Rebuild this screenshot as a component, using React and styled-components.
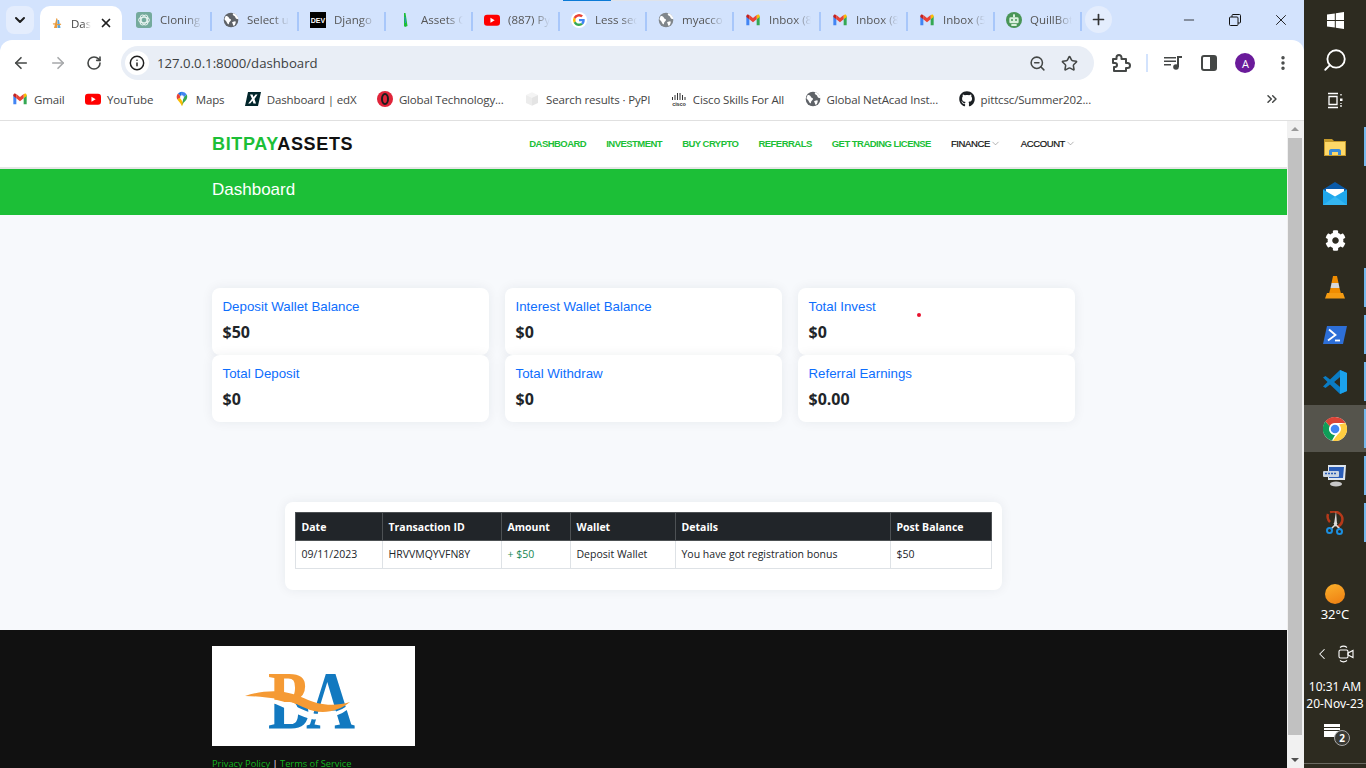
import styled, { createGlobalStyle } from 'styled-components';
import {
    ArrowLeft,
    ArrowRight,
    ChevronDown,
    ChevronLeft,
    ChevronsRight,
    EllipsisVertical,
    Info,
    Minus,
    Plus,
    RotateCw,
    Search,
    Star,
    X,
    ZoomOut,
} from 'lucide-react';
import { FaCog, FaGithub } from 'react-icons/fa';

const GREEN = '#1cbf37';
const CHROME_FONT = '"Open Sans", "Noto Sans", sans-serif';

const GlobalStyle = createGlobalStyle`
    html, body {
        margin: 0;
        height: 100%;
        overflow: hidden;
        background: #2d2b20;
    }
    #root {
        height: 100%;
    }
    * {
        box-sizing: border-box;
    }
`;

/* favicons */
const GmailIcon = ({ size = 16 }) => (
    <svg width={size} height={size} viewBox="0 0 24 24">
        <path d="M2 6v14h4.5V10z" fill="#4285f4" />
        <path d="M22 6v14h-4.5V10z" fill="#34a853" />
        <path d="M17.5 4.5V11L22 7.5V6c0-2-2.4-3-3.6-1.6z" fill="#fbbc04" />
        <path d="M6.5 11V4.5L12 9l5.500-4.500V11L12 15.300z" fill="#ea4335" />
        <path d="M2 6c0-2 2.400-3 3.600-1.600l.9.700V11L2 7.500z" fill="#c5221f" />
    </svg>
);
const YoutubeIcon = () => (
    <svg width="16" height="16" viewBox="0 0 24 24">
        <rect x="0" y="4" width="24" height="16.500" rx="4.500" fill="#f00" />
        <path d="M9.700 8.500v7.500l6.300-3.750z" fill="#fff" />
    </svg>
);
const GlobeIcon = ({ color = '#5f6368' }) => (
    <svg width="16" height="16" viewBox="0 0 24 24">
        <circle cx="12" cy="12" r="11" fill={color} />
        <path d="M4 6c3 0 4 1 5 3s3 1 3 3-3 2-3 5-2 1-3-1-3-4-4-5zM15 2c-1 2 0 3 2 4s1 3 3 4l3 1c0-4-3-8-8-9zM14 15l4-1c2 0 1 3 0 5s-3 2-3 0-2-2-1-4z" fill="#fff" />
    </svg>
);
const ChatgptIcon = () => (
    <svg width="16" height="16" viewBox="0 0 24 24">
        <rect width="24" height="24" rx="4" fill="#74aa9c" />
        <g fill="none" stroke="#e6f2ef" strokeWidth="1.600">
            <ellipse cx="12" cy="12" rx="8" ry="4.200" />
            <ellipse cx="12" cy="12" rx="8" ry="4.200" transform="rotate(60 12 12)" />
            <ellipse cx="12" cy="12" rx="8" ry="4.200" transform="rotate(120 12 12)" />
        </g>
    </svg>
);
const DevIcon = () => (
    <svg width="16" height="16" viewBox="0 0 16 16">
        <rect width="16" height="16" fill="#000" />
        <text x="8" y="11" textAnchor="middle" fontFamily="'Liberation Sans', sans-serif" fontSize="7" fontWeight="700" fill="#fff">
            DEV
        </text>
    </svg>
);
const AssetsIcon = () => (
    <svg width="16" height="16" viewBox="0 0 16 16">
        <path d="M7 1l1.500 0 2 13-2.500 1-1-1z" fill="#1cbf37" />
        <path d="M7.500 5l1 0 .5 6-1 0z" fill="#2d8fd0" />
    </svg>
);
const GoogleIcon = () => (
    <svg width="16" height="16" viewBox="0 0 24 24">
        <circle cx="12" cy="12" r="12" fill="#fff" />
        <path d="M20.600 12.200c0-.6-.1-1.200-.2-1.800H12v3.400h4.800a4 4 0 0 1-1.800 2.700l2.900 2.200c1.700-1.600 2.700-3.800 2.700-6.500z" fill="#4285f4" />
        <path d="M12 21c2.400 0 4.400-.8 5.900-2.200L15 16.500c-.8.500-1.800.9-3 .9-2.300 0-4.300-1.600-5-3.700l-3 2.300C5.500 19 8.500 21 12 21z" fill="#34a853" />
        <path d="M7 13.700a5.400 5.400 0 0 1 0-3.400l-3-2.300a9 9 0 0 0 0 8z" fill="#fbbc05" />
        <path d="M12 6.600c1.300 0 2.500.5 3.400 1.300L18 5.400A9 9 0 0 0 4 8l3 2.300c.7-2.100 2.700-3.700 5-3.700z" fill="#ea4335" />
    </svg>
);
const QuillbotIcon = () => (
    <svg width="16" height="16" viewBox="0 0 24 24">
        <circle cx="12" cy="12" r="12" fill="#499557" />
        <rect x="5" y="8" width="14" height="9" rx="2" fill="#d9efdd" />
        <circle cx="9" cy="12" r="1.500" fill="#499557" />
        <circle cx="15" cy="12" r="1.500" fill="#499557" />
        <rect x="10.500" y="3.500" width="3" height="4.500" fill="#d9efdd" />
        <rect x="8" y="18" width="8" height="3" fill="#d9efdd" />
    </svg>
);
const TabAssetIcon = () => (
    <svg width="16" height="16" viewBox="0 0 16 16">
        <path d="M5 13L7.500 3 8.500 4 8 13z" fill="#e99a3c" />
        <path d="M8.500 5h1.500l1.500 8H8.500z" fill="#5aa5dc" />
        <path d="M4 9c2.500-1 5 2 8 0" stroke="#e99a3c" strokeWidth="1.200" fill="none" />
    </svg>
);
const MapsIcon = () => (
    <svg width="16" height="16" viewBox="0 0 24 24">
        <path d="M12 1a8 8 0 0 0-6 2.800l5 5z" fill="#1a73e8" />
        <path d="M6 3.800A8 8 0 0 0 4 9c0 1.500.4 2.700 1 3.800L11 9z" fill="#ea4335" />
        <path d="M12 1a8 8 0 0 1 7 4.200L14.500 10l-3.500-1.200z" fill="#4285f4" />
        <path d="M5 12.800c1.500 2.800 5 5 7 10.200l2-5L9 10z" fill="#fbbc04" />
        <path d="M19 5.200c1.300 2.600 1.100 5-.3 7.500-1.500 2.500-3.500 3.500-4.700 5.300-.6.900-1.500 3.500-2 5 1.700-4 .4-9 2.500-13z" fill="#34a853" />
        <circle cx="12" cy="9" r="2.800" fill="#fff" />
    </svg>
);
const EdxIcon = () => (
    <svg width="16" height="16" viewBox="0 0 16 16">
        <path d="M3 1h13l-3 14H0z" fill="#02262b" />
        <path d="M5 3.500h2.500L8.500 6l2-2.500h2L9.500 8l1.500 4.500H8.500l-1-2.800-2.300 2.800h-2L7 7.800z" fill="#fff" />
    </svg>
);
const OperaIcon = () => (
    <svg width="16" height="16" viewBox="0 0 24 24">
        <circle cx="12" cy="12" r="12" fill="#e0243a" />
        <ellipse cx="12" cy="12" rx="4.500" ry="7.500" fill="none" stroke="#1d1d1d" strokeWidth="3" />
    </svg>
);
const PypiIcon = () => (
    <svg width="16" height="16" viewBox="0 0 24 24">
        <path d="M12 2l9 4-9 4-9-4z" fill="#f4f4f4" />
        <path d="M3 6l9 4v12l-9-4z" fill="#ececec" />
        <path d="M21 6l-9 4v12l9-4z" fill="#e4e4e4" />
    </svg>
);
const CiscoIcon = () => (
    <svg width="16" height="16" viewBox="0 0 16 16">
        <g stroke="#333" strokeWidth="1">
            {[1.5, 4, 6.500, 9, 11.500, 14].map((x, i) => (
                <line key={x} x1={x} x2={x} y1={[6, 4, 2, 2, 4, 6][i]} y2="9" />
            ))}
        </g>
        <text x="8" y="15" textAnchor="middle" fontFamily="'Liberation Sans', sans-serif" fontSize="5.500" fontWeight="700" fill="#333">
            cisco
        </text>
    </svg>
);

/* taskbar icons */
const WindowsIcon = () => (
    <svg width="17" height="17" viewBox="0 0 17 17">
        <path d="M0 2.500l7.800-1.100v6.600H0zM8.800 1.200L17 0v8H8.800zM0 9h7.800v6.600L0 14.500zM8.800 9H17v8l-8.200-1.200z" fill="#fff" />
    </svg>
);
const TaskViewIcon = () => (
    <svg width="17" height="17" viewBox="0 0 17 17" fill="none" stroke="#fff" strokeWidth="1.300">
        <path d="M1 1.500h10M1 15.500h10M2 4.500h8v8H2z" />
        <path d="M14 2v1.500M14 13v2" />
        <rect x="13" y="6.500" width="2.500" height="2.500" fill="#fff" stroke="none" />
        <path d="M14 11v1" />
    </svg>
);
const FolderIcon = () => (
    <svg width="22" height="18" viewBox="0 0 22 18">
        <path d="M0 1h8l2 2h12v15H0z" fill="#c59a2b" />
        <path d="M1 4h20v13H1z" fill="#fdd868" />
        <path d="M5 17v-4c0-1 1-2 2-2h8c1 0 2 1 2 2v4h-3v-3H8v3z" fill="#3a8bd8" />
    </svg>
);
const MailIcon = () => (
    <svg width="24" height="23" viewBox="0 0 24 23">
        <path d="M12 0l12 7.500V10H0V7.500z" fill="#0a5aa8" />
        <path d="M3 7h18v7l-9 4-9-4z" fill="#fff" />
        <path d="M0 7.500l12 7 12-7V23H0z" fill="#1fa8ec" />
        <path d="M0 23l12-8.500 12 8.500z" fill="#43c0f5" opacity=".6" />
    </svg>
);
const VlcIcon = () => (
    <svg width="20" height="23" viewBox="0 0 20 23">
        <path d="M8 0h4l1.500 7h-7z" fill="#f08c00" />
        <path d="M6.500 7h7l1 5h-9z" fill="#d8d8d8" />
        <path d="M5.500 12h9l1.500 5.500H4z" fill="#f08c00" />
        <path d="M2 17h16l2 5.500H0z" fill="#f59b12" />
    </svg>
);
const PowershellIcon = () => (
    <svg width="24" height="18" viewBox="0 0 24 18">
        <path d="M4 0h20l-4 18H0z" fill="#2d6fd8" />
        <path d="M6 3.500l6.500 5.500L5 14.500" fill="none" stroke="#fff" strokeWidth="1.800" />
        <path d="M12 14.500h5" stroke="#fff" strokeWidth="1.800" />
    </svg>
);
const VscodeIcon = () => (
    <svg width="24" height="24" viewBox="0 0 24 24">
        <path d="M17 0l7 3v18l-7 3-10-9.500L2.500 18 0 16.500 4.500 12 0 7.500 2.500 6 7 9.500z" fill="#0a7cc4" />
        <path d="M17 0l7 3v18l-7 3V17l-6-5 6-5z" fill="#1ba1ec" />
        <path d="M17 7l-6 5 6 5z" fill="#2d2b20" />
    </svg>
);
const ChromeIcon = () => (
    <svg width="24" height="24" viewBox="0 0 24 24">
        <circle cx="12" cy="12" r="12" fill="#fff" />
        <path d="M12 0a12 12 0 0 1 10.400 6H12a6 6 0 0 0-5.300 3.200L2.400 4.500A12 12 0 0 1 12 0z" fill="#db4437" />
        <path d="M2.400 4.500l4.300 4.700A6 6 0 0 0 12 18l-3 5.600A12 12 0 0 1 2.400 4.500z" fill="#0f9d58" />
        <path d="M22.400 6A12 12 0 0 1 9.800 23.800L15.100 17A6 6 0 0 0 16 7.500z" fill="#ffcd40" />
        <circle cx="12" cy="12" r="5.500" fill="#fff" />
        <circle cx="12" cy="12" r="4.300" fill="#4285f4" />
    </svg>
);
const RdpIcon = () => (
    <svg width="24" height="24" viewBox="0 0 24 24">
        <path d="M5 1l18 0-1 15H5z" fill="#dfe6ee" />
        <path d="M6 3h15l-1 11H6z" fill="#2a5db8" />
        <rect x="0" y="7" width="16" height="6" rx="1" fill="#c9d4e2" />
        <path d="M2 9.500h12" stroke="#2a5db8" strokeWidth="1.500" strokeDasharray="2 1" />
        <ellipse cx="13" cy="20" rx="6" ry="2.500" fill="#c8c8c8" />
    </svg>
);
const SnipIcon = () => (
    <svg width="20" height="24" viewBox="0 0 20 24">
        <path d="M5 1c8-2 14 3 12 10-1 3-3 4-5 5" fill="none" stroke="#b5391a" strokeWidth="2.500" />
        <path d="M3 3c-1 3 0 6 2 8" fill="none" stroke="#b5391a" strokeWidth="2.500" />
        <path d="M11 0l1 13-2 3-1-3z" fill="#ddd" />
        <path d="M12 12l-6 6M9 12l6 6" stroke="#ddd" strokeWidth="1.500" />
        <circle cx="4.500" cy="19.500" r="2.500" fill="none" stroke="#1b8fe0" strokeWidth="2" />
        <circle cx="14.500" cy="20.500" r="2.500" fill="none" stroke="#1b8fe0" strokeWidth="2" />
    </svg>
);
const MeetIcon = () => (
    <svg width="16" height="18" viewBox="0 0 16 18" fill="none" stroke="#fff" strokeWidth="1.100">
        <rect x="1" y="5" width="9" height="8" rx="1.500" />
        <path d="M10 8l5-2.500v7L10 10z" />
        <path d="M2 2.500c2-1.500 5-1.500 7 0M2 15.500c2 1.500 5 1.500 7 0" />
    </svg>
);
const ExtensionIcon = () => (
    <svg width="20" height="20" viewBox="0 0 20 20" fill="none" stroke="#444746" strokeWidth="2" strokeLinejoin="round">
        <path d="M2 6h3.500V4.500a2.500 2.500 0 0 1 5 0V6H15v4h1.500a2.500 2.500 0 0 1 0 5H15v3H3v-4h1a2 2 0 0 0 0-4H2z" />
    </svg>
);
const MediaIcon = () => (
    <svg width="18" height="14" viewBox="0 0 18 14" fill="#444746">
        <path d="M0 1h12v1.600H0zM0 4.500h12v1.600H0zM0 8h7v1.600H0z" />
        <path d="M13 0h5v2h-3v9h-2z" />
        <circle cx="12" cy="11" r="2.800" />
    </svg>
);
const SidePanelIcon = () => (
    <svg width="16" height="16" viewBox="0 0 16 16">
        <rect x="1" y="1" width="14" height="14" rx="2" fill="none" stroke="#444746" strokeWidth="2" />
        <rect x="9" y="1" width="6" height="14" fill="#444746" />
    </svg>
);
const RestoreIcon = () => (
    <svg width="12" height="12" viewBox="0 0 12 12" fill="none" stroke="#111" strokeWidth="1">
        <rect x=".5" y="3" width="8.500" height="8.500" rx="1" />
        <path d="M3 3V1.500a1 1 0 0 1 1-1h6.500a1 1 0 0 1 1 1V8a1 1 0 0 1-1 1H9" />
    </svg>
);
const BaLogo = () => (
    <svg width="203" height="100" viewBox="0 0 203 100">
        <defs>
            <linearGradient id="bFill" x1="0" x2="0" y1="0" y2="1">
                <stop offset="0.55" stopColor="#f59a34" />
                <stop offset="0.55" stopColor="#1279c0" />
            </linearGradient>
        </defs>
        <text transform="translate(56 82) scale(.76 1)" fontFamily="'Liberation Serif', serif" fontSize="83" fontWeight="700" fill="url(#bFill)">
            B
        </text>
        <text transform="translate(94 82) scale(.82 1)" fontFamily="'Liberation Serif', serif" fontSize="83" fontWeight="700" fill="#1279c0">
            A
        </text>
        <path d="M60 55C75 55 88 66 102 69C115 71 128 67 138 60C128 68 115 72 102 72C88 70 75 60 60 55z" fill="#fff" stroke="#fff" strokeWidth="3" />
        <path d="M33 50C45 46 60 44 72 46C85 48 92 53 105 57C117 60 128 59 138 56C128 64 115 68 102 65C90 62 80 54 68 53C55 52 45 50 33 50z" fill="#f59a34" />
    </svg>
);

const TABS = [
    { icon: <ChatgptIcon />, title: 'Cloning' },
    { icon: <GlobeIcon />, title: 'Select u' },
    { icon: <DevIcon />, title: 'Django' },
    { icon: <AssetsIcon />, title: 'Assets C' },
    { icon: <YoutubeIcon />, title: '(887) Py' },
    { icon: <GoogleIcon />, title: 'Less sec' },
    { icon: <GlobeIcon color="#80868b" />, title: 'myacco' },
    { icon: <GmailIcon />, title: 'Inbox (8' },
    { icon: <GmailIcon />, title: 'Inbox (8' },
    { icon: <GmailIcon />, title: 'Inbox (5' },
    { icon: <QuillbotIcon />, title: 'QuillBot' },
];

const BOOKMARKS = [
    { icon: <GmailIcon />, title: 'Gmail' },
    { icon: <YoutubeIcon />, title: 'YouTube' },
    { icon: <MapsIcon />, title: 'Maps' },
    { icon: <EdxIcon />, title: 'Dashboard | edX' },
    { icon: <OperaIcon />, title: 'Global Technology...' },
    { icon: <PypiIcon />, title: 'Search results · PyPI' },
    { icon: <CiscoIcon />, title: 'Cisco Skills For All' },
    { icon: <GlobeIcon />, title: 'Global NetAcad Inst...' },
    { icon: <FaGithub size={16} color="#1b1f23" />, title: 'pittcsc/Summer202...' },
];

const NAV_LINKS = ['DASHBOARD', 'INVESTMENT', 'BUY CRYPTO', 'REFERRALS', 'GET TRADING LICENSE'];

const CARDS = [
    { label: 'Deposit Wallet Balance', value: '$50' },
    { label: 'Interest Wallet Balance', value: '$0' },
    { label: 'Total Invest', value: '$0' },
    { label: 'Total Deposit', value: '$0' },
    { label: 'Total Withdraw', value: '$0' },
    { label: 'Referral Earnings', value: '$0.00' },
];

const COLUMNS = [
    { title: 'Date', width: 87 },
    { title: 'Transaction ID', width: 119 },
    { title: 'Amount', width: 69 },
    { title: 'Wallet', width: 105 },
    { title: 'Details', width: 215 },
    { title: 'Post Balance', width: 101 },
];

const PINNED = [
    { icon: <FolderIcon />, running: true },
    { icon: <MailIcon /> },
    { icon: <FaCog size={21} color="#fff" /> },
    { icon: <VlcIcon />, running: true },
    { icon: <PowershellIcon />, running: true },
    { icon: <VscodeIcon />, running: true },
    { icon: <ChromeIcon />, running: true, active: true },
    { icon: <RdpIcon />, running: true },
    { icon: <SnipIcon />, running: true },
];

const App = () => (
    <Desktop>
        <GlobalStyle />
        <BrowserWindow>
            <TabStrip>
                <LoadingBar />
                <TabSearchButton>
                    <ChevronDown size={16} strokeWidth={3} color="#1f1f1f" />
                </TabSearchButton>
                <ActiveTab>
                    <TabAssetIcon />
                    <ActiveTabTitle>Das</ActiveTabTitle>
                    <X size={14} strokeWidth={3} color="#1f1f1f" />
                </ActiveTab>
                <TabList>
                    {TABS.map((tab, i) => (
                        <Tab key={i}>
                            <IconSlot>{tab.icon}</IconSlot>
                            <TabTitle>{tab.title}</TabTitle>
                        </Tab>
                    ))}
                </TabList>
                <NewTabButton>
                    <Plus size={17} strokeWidth={2.4} color="#333" />
                </NewTabButton>
                <WindowControls>
                    <WindowButton>
                        <Minus size={16} strokeWidth={1.2} color="#111" />
                    </WindowButton>
                    <WindowButton>
                        <RestoreIcon />
                    </WindowButton>
                    <WindowButton>
                        <X size={18} strokeWidth={1.2} color="#111" />
                    </WindowButton>
                </WindowControls>
            </TabStrip>
            <Toolbar>
                <NavIcons>
                    <ArrowLeft size={18} strokeWidth={2.2} color="#444746" />
                    <ArrowRight size={18} strokeWidth={2.2} color="#a6a8aa" />
                    <RotateCw size={16} strokeWidth={2.4} color="#444746" />
                </NavIcons>
                <AddressBar>
                    <InfoBadge>
                        <Info size={16} strokeWidth={2.2} color="#1f1f1f" />
                    </InfoBadge>
                    <UrlText>127.0.0.1:8000/dashboard</UrlText>
                    <AddressActions>
                        <ZoomOut size={17} strokeWidth={2.2} color="#444746" />
                        <Star size={17} strokeWidth={2.2} color="#444746" />
                    </AddressActions>
                </AddressBar>
                <ToolbarActions>
                    <ExtensionIcon />
                    <ToolbarDivider />
                    <MediaIcon />
                    <SidePanelIcon />
                    <Avatar>A</Avatar>
                    <EllipsisVertical size={18} strokeWidth={2.6} color="#444746" />
                </ToolbarActions>
            </Toolbar>
            <BookmarkBar>
                <BookmarkList>
                    {BOOKMARKS.map((mark) => (
                        <Bookmark key={mark.title}>
                            <IconSlot>{mark.icon}</IconSlot>
                            <span>{mark.title}</span>
                        </Bookmark>
                    ))}
                </BookmarkList>
                <ChevronsRight size={16} strokeWidth={2.2} color="#444746" />
            </BookmarkBar>
            <Viewport>
                <Page>
                    <SiteHeader>
                        <Container>
                            <HeaderRow>
                                <Brand>
                                    <BrandAccent>BITPAY</BrandAccent>ASSETS
                                </Brand>
                                <SiteNav>
                                    {NAV_LINKS.map((link) => (
                                        <NavLink key={link}>{link}</NavLink>
                                    ))}
                                    <NavMenu>
                                        FINANCE <ChevronDown size={11} strokeWidth={1.2} color="#777" />
                                    </NavMenu>
                                    <NavMenu>
                                        ACCOUNT <ChevronDown size={11} strokeWidth={1.2} color="#777" />
                                    </NavMenu>
                                </SiteNav>
                            </HeaderRow>
                        </Container>
                    </SiteHeader>
                    <TitleBand>
                        <Container>
                            <PageTitle>Dashboard</PageTitle>
                        </Container>
                    </TitleBand>
                    <Main>
                        <Container>
                            <CardGrid>
                                {CARDS.map((card) => (
                                    <StatCard key={card.label}>
                                        <StatLabel>{card.label}</StatLabel>
                                        <StatValue>{card.value}</StatValue>
                                    </StatCard>
                                ))}
                            </CardGrid>
                        </Container>
                        <TableCard>
                            <Table>
                                <colgroup>
                                    {COLUMNS.map((col) => (
                                        <col key={col.title} width={col.width} />
                                    ))}
                                </colgroup>
                                <thead>
                                    <tr>
                                        {COLUMNS.map((col) => (
                                            <HeadCell key={col.title}>{col.title}</HeadCell>
                                        ))}
                                    </tr>
                                </thead>
                                <tbody>
                                    <tr>
                                        <Cell>09/11/2023</Cell>
                                        <Cell>HRVVMQYVFN8Y</Cell>
                                        <Cell $credit>+ $50</Cell>
                                        <Cell>Deposit Wallet</Cell>
                                        <Cell>You have got registration bonus</Cell>
                                        <Cell>$50</Cell>
                                    </tr>
                                </tbody>
                            </Table>
                        </TableCard>
                    </Main>
                    <Footer>
                        <Container>
                            <LogoBox>
                                <BaLogo />
                            </LogoBox>
                            <FooterLinks>
                                <FooterLink>Privacy Policy</FooterLink> | <FooterLink>Terms of Service</FooterLink>
                            </FooterLinks>
                        </Container>
                    </Footer>
                    <PointerDot />
                </Page>
                <Scrollbar>
                    <ScrollArrow $up />
                    <ScrollThumb />
                    <ScrollArrow />
                </Scrollbar>
            </Viewport>
        </BrowserWindow>
        <Taskbar>
            <StartGroup>
                <TaskItem>
                    <WindowsIcon />
                </TaskItem>
                <TaskItem>
                    <Search size={26} strokeWidth={1.7} color="#fff" style={{ transform: 'scaleX(-1)' }} />
                </TaskItem>
                <TaskItem>
                    <TaskViewIcon />
                </TaskItem>
            </StartGroup>
            <PinnedGroup>
                {PINNED.map((item, i) => (
                    <PinnedItem key={i} $active={item.active}>
                        {item.icon}
                        {item.running && <RunningMark />}
                    </PinnedItem>
                ))}
            </PinnedGroup>
            <Tray>
                <WeatherSun />
                <TrayText>32°C</TrayText>
                <TrayIcons>
                    <ChevronLeft size={18} strokeWidth={1.4} color="#fff" />
                    <MeetIcon />
                </TrayIcons>
                <Clock>
                    <div>10:31 AM</div>
                    <div>20-Nov-23</div>
                </Clock>
                <Notifications>
                    <NoteBubble />
                    <NoteBadge>2</NoteBadge>
                </Notifications>
            </Tray>
        </Taskbar>
    </Desktop>
);

const Desktop = styled.div`
    display: flex;
    width: 100%;
    height: 100%;
    overflow: hidden;
`;
const BrowserWindow = styled.div`
    display: flex;
    flex-direction: column;
    width: 1304px;
    height: 100%;
    background: #d3e3fd;
`;
const TabStrip = styled.div`
    position: relative;
    display: flex;
    align-items: flex-start;
    flex: none;
    height: 40px;
    padding: 6px 0 0 6px;
    font-family: ${CHROME_FONT};
`;
const LoadingBar = styled.div`
    position: absolute;
    top: 0;
    left: 563px;
    width: 224px;
    height: 1px;
    background: linear-gradient(to right, #0b7ad6 48px, #dfe3ea 48px);
`;
const TabSearchButton = styled.div`
    display: flex;
    align-items: center;
    justify-content: center;
    flex: none;
    width: 28px;
    height: 28px;
    border-radius: 8px;
    background: #e4edfd;
`;
const ActiveTab = styled.div`
    display: flex;
    align-items: center;
    flex: none;
    width: 82px;
    height: 34px;
    margin-left: 6px;
    padding: 0 9px 0 9px;
    border-radius: 10px 10px 0 0;
    background: #fff;
`;
const ActiveTabTitle = styled.span`
    flex: 1;
    min-width: 0;
    margin-left: 6px;
    white-space: nowrap;
    font-size: 11.5px;
    color: #444;
    -webkit-mask-image: linear-gradient(to right, #000 12px, transparent 20px);
    mask-image: linear-gradient(to right, #000 12px, transparent 20px);
`;
const TabList = styled.div`
    display: flex;
    margin-left: 3px;
`;
const Tab = styled.div`
    display: flex;
    align-items: center;
    gap: 8px;
    width: 87px;
    height: 28px;
    padding: 0 0 1px 11px;
    border-right: 2px solid #a8c7fa;
    font-size: 11.5px;
    color: #555;
    border-image: linear-gradient(to bottom, transparent 7px, #a8c7fa 7px, #a8c7fa 24px, transparent 24px) 1;
`;
const IconSlot = styled.span`
    display: flex;
    align-items: center;
    justify-content: center;
    flex: none;
    width: 16px;
    height: 16px;
`;
const TabTitle = styled.span`
    white-space: nowrap;
    -webkit-mask-image: linear-gradient(to right, #000 26px, transparent 42px);
    mask-image: linear-gradient(to right, #000 26px, transparent 42px);
`;
const NewTabButton = styled.div`
    display: flex;
    align-items: center;
    justify-content: center;
    flex: none;
    width: 27px;
    height: 27px;
    margin-left: 3px;
    border-radius: 50%;
    background: #e4edfd;
`;
const WindowControls = styled.div`
    display: flex;
    margin: -6px 0 0 auto;
`;
const WindowButton = styled.div`
    display: flex;
    align-items: center;
    justify-content: center;
    width: 46px;
    height: 40px;
`;
const Toolbar = styled.div`
    display: flex;
    align-items: center;
    flex: none;
    height: 40px;
    padding-top: 6px;
    border-radius: 12px 12px 0 0;
    background: #fff;
    font-family: ${CHROME_FONT};
`;
const NavIcons = styled.div`
    display: flex;
    align-items: center;
    justify-content: space-between;
    flex: none;
    width: 90px;
    margin: 0 11px 0 12px;
`;
const AddressBar = styled.div`
    display: flex;
    align-items: center;
    flex: none;
    width: 973px;
    height: 34px;
    margin-left: 8px;
    padding: 0 16px 0 4px;
    border-radius: 17px;
    background: #e9eef6;
`;
const InfoBadge = styled.div`
    display: flex;
    align-items: center;
    justify-content: center;
    width: 24px;
    height: 24px;
    border-radius: 50%;
    background: #fff;
`;
const UrlText = styled.span`
    margin-left: 8px;
    font-size: 13.2px;
    color: #3c3f41;
`;
const AddressActions = styled.div`
    display: flex;
    align-items: center;
    gap: 15px;
    margin-left: auto;
`;
const ToolbarActions = styled.div`
    display: flex;
    align-items: center;
    flex: 1;
    padding: 0 12px 0 17px;
    justify-content: space-between;
`;
const ToolbarDivider = styled.div`
    width: 2px;
    height: 18px;
    margin: 0 -2px 0 -4px;
    background: #d3e3fd;
`;
const Avatar = styled.div`
    display: flex;
    align-items: center;
    justify-content: center;
    width: 20px;
    height: 20px;
    border-radius: 50%;
    background: #6a1b9a;
    font-size: 11px;
    color: #fff;
`;
const BookmarkBar = styled.div`
    display: flex;
    align-items: center;
    justify-content: space-between;
    flex: none;
    height: 41px;
    padding: 0 24px 2px 12px;
    border-bottom: 1px solid #e0e0e0;
    background: #fff;
    font-family: ${CHROME_FONT};
`;
const BookmarkList = styled.div`
    display: flex;
    align-items: center;
    gap: 20.5px;
`;
const Bookmark = styled.div`
    display: flex;
    align-items: center;
    gap: 6px;
    font-size: 11.5px;
    letter-spacing: -0.15px;
    white-space: nowrap;
    color: #444;
`;
const Viewport = styled.div`
    display: flex;
    flex: 1;
    min-height: 0;
`;
const Page = styled.div`
    position: relative;
    flex: 1;
    min-width: 0;
    overflow: hidden;
    background: #f7f9fc;
    font-family: 'Liberation Sans', Arial, sans-serif;
`;
const Container = styled.div`
    width: 863px;
    margin: 0 auto;
`;
const SiteHeader = styled.header`
    height: 48px;
    border-bottom: 2px solid #e6e6e6;
    background: #fff;
`;
const HeaderRow = styled.div`
    display: flex;
    align-items: center;
    justify-content: space-between;
    height: 46px;
`;
const Brand = styled.div`
    font-size: 18px;
    font-weight: 700;
    letter-spacing: 0.65px;
    color: #111;
`;
const BrandAccent = styled.span`
    color: ${GREEN};
`;
const SiteNav = styled.nav`
    display: flex;
    align-items: center;
    gap: 20px;
    margin: -1px -1px 0 0;
`;
const NavLink = styled.a`
    font-size: 9.5px;
    font-weight: 700;
    letter-spacing: -0.53px;
    color: ${GREEN};
`;
const NavMenu = styled.a`
    display: flex;
    align-items: center;
    font-size: 9.5px;
    letter-spacing: -0.4px;
    color: #111;
    -webkit-text-stroke: 0.2px #111;
`;
const TitleBand = styled.div`
    height: 46px;
    background: ${GREEN};
`;
const PageTitle = styled.h1`
    margin: 0;
    font-size: 17px;
    font-weight: 400;
    line-height: 41px;
    color: #fff;
`;
const Main = styled.main`
    padding: 73px 0 40px;
`;
const CardGrid = styled.div`
    display: grid;
    grid-template-columns: repeat(3, 277px);
    grid-auto-rows: 67px;
    column-gap: 16px;
`;
const StatCard = styled.div`
    padding: 10px 11px 10px 10.5px;
    border-radius: 8px;
    background: #fff;
    box-shadow: 0 0 12px rgba(30, 40, 60, 0.07);
`;
const StatLabel = styled.div`
    font-size: 13.3px;
    line-height: 17px;
    color: #0d6efd;
`;
const StatValue = styled.div`
    margin-top: 6px;
    font-family: 'Open Sans', sans-serif;
    font-size: 16px;
    font-weight: 700;
    line-height: 22px;
    color: #212529;
`;
const TableCard = styled.div`
    width: 717px;
    height: 88px;
    margin: 80px auto 0;
    padding: 10px;
    border-radius: 8px;
    background: #fff;
    box-shadow: 0 0 12px rgba(30, 40, 60, 0.07);
`;
const Table = styled.table`
    width: 696px;
    border-collapse: collapse;
    table-layout: fixed;
    font-family: 'Open Sans', sans-serif;
    font-size: 10.5px;
`;
const HeadCell = styled.th`
    height: 28px;
    padding: 0 5.5px;
    border: 1px solid #4d5154;
    background: #212529;
    text-align: left;
    font-weight: 700;
    color: #fff;
`;
const Cell = styled.td`
    height: 28px;
    padding: 0 5.5px 2px;
    border: 1px solid #dee2e6;
    white-space: nowrap;
    color: ${({ $credit }) => ($credit ? '#198754' : '#212529')};
`;
const Footer = styled.footer`
    height: 200px;
    padding-top: 16px;
    background: #111;
`;
const LogoBox = styled.div`
    width: 203px;
    height: 100px;
    background: #fff;
`;
const FooterLinks = styled.div`
    margin-top: 11px;
    font-family: 'Open Sans', sans-serif;
    font-size: 9.3px;
    line-height: 14px;
    color: #fff;
`;
const FooterLink = styled.a`
    color: #12b51f;
`;
const PointerDot = styled.div`
    position: absolute;
    top: 192px;
    left: 917px;
    width: 4px;
    height: 4px;
    border-radius: 50%;
    background: #e8112d;
`;
const Scrollbar = styled.div`
    display: flex;
    flex-direction: column;
    flex: none;
    width: 17px;
    background: #f1f1f1;
`;
const ScrollArrow = styled.div`
    position: relative;
    flex: none;
    height: ${({ $up }) => ($up ? '17px' : '33px')};

    &::after {
        content: '';
        position: absolute;
        left: 4px;
        ${({ $up }) => ($up ? 'top: 6px;' : 'bottom: 6px;')}
        border-left: 4px solid transparent;
        border-right: 4px solid transparent;
        ${({ $up }) => ($up ? 'border-bottom: 4px solid #9a9a9a;' : 'border-top: 4px solid #505050;')}
    }
`;
const ScrollThumb = styled.div`
    flex: 1;
    margin: 0 2px 0 1px;
    background: #c1c1c1;
`;
const Taskbar = styled.aside`
    display: flex;
    flex-direction: column;
    flex: none;
    width: 62px;
    height: 100%;
    background: #2d2b20;
    font-family: 'Noto Sans', sans-serif;
`;
const StartGroup = styled.div`
    flex: none;
    height: 123px;
`;
const TaskItem = styled.div`
    display: flex;
    align-items: center;
    justify-content: center;
    height: 40px;
`;
const PinnedGroup = styled.div`
    display: flex;
    flex-direction: column;
`;
const PinnedItem = styled.div`
    position: relative;
    display: flex;
    align-items: center;
    justify-content: center;
    height: 47px;
    background: ${({ $active }) => ($active ? '#55544c' : 'transparent')};
`;
const RunningMark = styled.div`
    position: absolute;
    top: 4px;
    right: 0;
    bottom: 4px;
    width: 2px;
    background: #76b9ed;
`;
const Tray = styled.div`
    display: flex;
    flex-direction: column;
    align-items: center;
    margin-top: auto;
    height: 180px;
    border-bottom: 1px solid #6b6a62;
    margin-bottom: 4px;
    color: #fff;
`;
const WeatherSun = styled.div`
    width: 20px;
    height: 20px;
    flex: none;
    border-radius: 50%;
    background: linear-gradient(160deg, #fbb12c, #ee7d11);
`;
const TrayText = styled.div`
    font-size: 13px;
    line-height: 20px;
`;
const TrayIcons = styled.div`
    display: flex;
    align-items: center;
    gap: 7px;
    height: 20px;
    margin-top: 20px;
    padding-right: 4px;
`;
const Clock = styled.div`
    margin-top: 14px;
    font-size: 12px;
    line-height: 17px;
    text-align: center;
    white-space: nowrap;
`;
const Notifications = styled.div`
    position: relative;
    width: 24px;
    height: 22px;
    margin-top: 12px;
`;
const NoteBubble = styled.div`
    width: 16px;
    height: 13px;
    margin-left: 1px;
    background: linear-gradient(#fff 3px, #2d2b20 3px, #2d2b20 4px, #fff 4px, #fff 6px, #2d2b20 6px, #2d2b20 7px, #fff 7px);
`;
const NoteBadge = styled.div`
    position: absolute;
    top: 6px;
    right: -3px;
    display: flex;
    align-items: center;
    justify-content: center;
    width: 16px;
    height: 16px;
    border: 1px solid #aaa;
    border-radius: 50%;
    background: #3a3a34;
    font-size: 10px;
    font-weight: 700;
`;

export default App;
